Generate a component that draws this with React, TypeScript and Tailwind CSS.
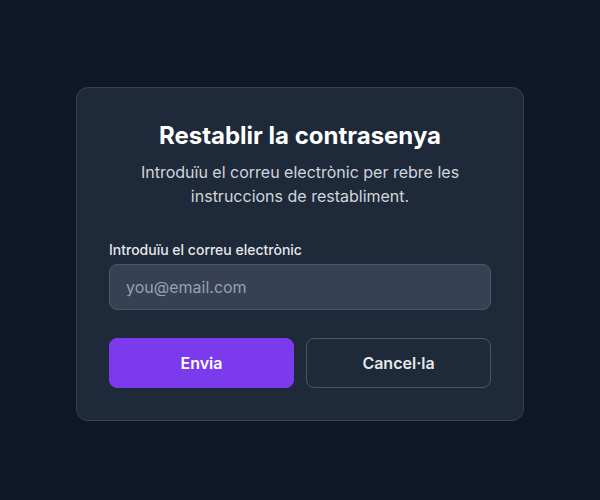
export default function App() {
  return (
    <div
      className="min-h-screen bg-gray-900 flex items-center justify-center px-4 pt-2"
      style={{ fontFamily: 'Inter, "Noto Sans", sans-serif' }}
    >
      <div className="w-full max-w-md bg-gray-800 border border-gray-700 rounded-xl p-8">
        <h1 className="text-2xl font-bold text-white text-center">Restablir la contrasenya</h1>
        <p className="mt-2 text-base text-gray-300 text-center">
          Introduïu el correu electrònic per rebre les instruccions de restabliment.
        </p>

        <div className="mt-8">
          <label className="block text-sm font-medium text-gray-200 mb-1">
            Introduïu el correu electrònic
          </label>
          <input
            type="email"
            placeholder="you@email.com"
            className="w-full bg-gray-700 border border-gray-600 rounded-lg px-4 py-2.5 text-base text-white placeholder-gray-400 outline-none"
          />
        </div>

        <div className="mt-7 flex gap-3">
          <button className="flex-1 bg-[#7c3aed] text-white font-semibold rounded-lg py-3 border border-[#7c3aed]">
            Envia
          </button>
          <button className="flex-1 bg-transparent text-gray-200 font-semibold rounded-lg py-3 border border-gray-600">
            Cancel·la
          </button>
        </div>
      </div>
    </div>
  )
}
